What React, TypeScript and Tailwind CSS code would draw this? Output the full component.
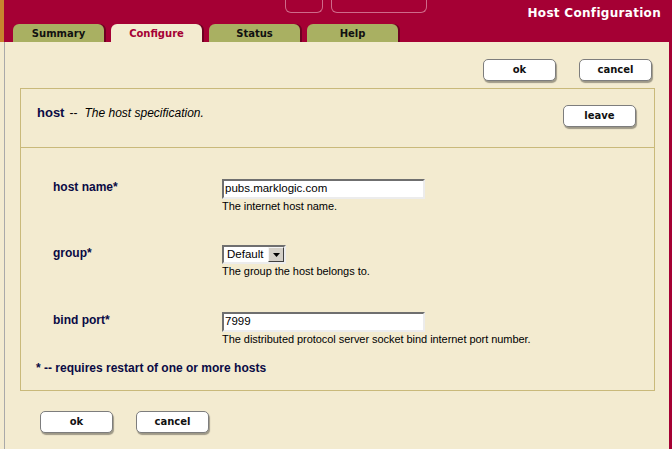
import React from "react";

const V = { fontFamily: '"DejaVu Sans", Verdana, sans-serif' };
const A = { fontFamily: '"Liberation Sans", Arial, sans-serif' };

function Btn({ label }: { label: string }) {
  return (
    <div
      style={V}
      className="w-[73px] h-[22px] flex items-center justify-center bg-white border border-[#7d7d7d] rounded-[5px] shadow-[1px_2px_1px_rgba(0,0,0,0.35)] text-[10px] font-bold text-[#111] leading-none"
    >
      {label}
    </div>
  );
}

function Tab({ label, active }: { label: string; active?: boolean }) {
  return (
    <div
      style={V}
      className={
        "w-[91px] h-[18px] rounded-t-[6px] flex items-center justify-center text-[10px] font-bold leading-none shadow-[2px_0_0_#6e0022] " +
        (active ? "bg-[#f3ebd0] text-[#a50034]" : "bg-[#a9b062] text-[#111]")
      }
    >
      <span className="mt-[1px]">{label}</span>
    </div>
  );
}

function TextInput({ value }: { value: string }) {
  return (
    <div
      style={A}
      className="w-[203px] h-[20px] bg-white border-2 border-t-[#6f6f6f] border-l-[#6f6f6f] border-b-[#ececec] border-r-[#ececec] flex items-center pl-[1px] text-[11.5px] text-black leading-none"
    >
      {value}
    </div>
  );
}

function Row({
  label,
  control,
  help,
  h,
}: {
  label: string;
  control: React.ReactNode;
  help: string;
  h?: string;
}) {
  return (
    <div className={"flex items-start " + (h ?? "")}>
      <div
        style={A}
        className="w-[169px] pt-[1px] text-[12px] leading-[14px] font-bold text-[#0a0a44]"
      >
        {label}
      </div>
      <div className="flex flex-col">
        {control}
        <div style={A} className="mt-[1px] text-[11px] leading-[13px] text-black tracking-[-0.05px]">
          {help}
        </div>
      </div>
    </div>
  );
}

export default function App() {
  return (
    <div className="w-[672px] h-[449px] overflow-hidden flex flex-col bg-[#a50034]">
      {/* header */}
      <div className="flex h-[42px] shrink-0">
        <div className="w-[4px] bg-[#c8842e]" />
        <div className="flex-1 flex flex-col">
          <div className="h-[24px] flex">
            <div className="ml-[281px] flex items-start gap-[8px]">
              <div className="w-[38px] h-[13px] border border-t-0 border-[#cf6a8a] rounded-b-[6px]" />
              <div className="w-[96px] h-[13px] border border-t-0 border-[#cf6a8a] rounded-b-[6px]" />
            </div>
            <div
              style={V}
              className="ml-auto self-center pr-[11px] mt-[1px] text-white font-bold text-[12px] tracking-[0.3px] leading-none"
            >
              Host Configuration
            </div>
          </div>
          <div className="h-[18px] flex pl-[9px] gap-[7px]">
            <Tab label="Summary" />
            <Tab label="Configure" active />
            <Tab label="Status" />
            <Tab label="Help" />
          </div>
        </div>
      </div>

      {/* body */}
      <div className="flex flex-1 min-h-0">
        <div className="flex-1 bg-[#f3ebd0] pl-[4px]">
          <div className="h-full border-l border-[#a9a9a9] flex flex-col">
            <div className="mt-[17px] flex justify-end gap-[23px] pr-[17px]">
              <Btn label="ok" />
              <Btn label="cancel" />
            </div>

            <div className="mt-[7px] ml-[15px] w-[635px] border border-[#c9b97a] flex flex-col">
              <div className="h-[59px] border-b border-[#c9b97a] flex items-start justify-between pl-[16px] pr-[18px] pt-[16px]">
                <div style={A} className="flex items-baseline text-[#0a0a44] leading-[16px]">
                  <span className="text-[13px] font-bold">host</span>
                  <span className="ml-[5px] text-[12px] text-black">--</span>
                  <span className="ml-[7px] text-[12px] italic text-black">
                    The host specification.
                  </span>
                </div>
                <Btn label="leave" />
              </div>

              <div className="pt-[31px] pb-[15px] flex flex-col">
                <div className="pl-[32px] flex flex-col">
                  <Row
                    h="h-[66px]"
                    label="host name*"
                    control={<TextInput value="pubs.marklogic.com" />}
                    help="The internet host name."
                  />
                  <Row
                    h="h-[67px]"
                    label="group*"
                    control={
                      <div
                        style={A}
                        className="w-[64px] h-[19px] bg-white border-2 border-t-[#6f6f6f] border-l-[#6f6f6f] border-b-[#ececec] border-r-[#ececec] flex items-center justify-between text-[11.5px] leading-none text-black"
                      >
                        <span className="pl-[3px]">Default</span>
                        <div className="w-[16px] h-[15px] bg-[#d4d0c8] border border-t-[#f4f4f4] border-l-[#f4f4f4] border-b-[#404040] border-r-[#404040] flex items-center justify-center">
                          <svg width="7" height="4" viewBox="0 0 7 4">
                            <path d="M0 0h7L3.5 4z" fill="#000" />
                          </svg>
                        </div>
                      </div>
                    }
                    help="The group the host belongs to."
                  />
                  <Row
                    label="bind port*"
                    control={<TextInput value="7999" />}
                    help="The distributed protocol server socket bind internet port number."
                  />
                </div>
                <div
                  style={A}
                  className="mt-[15px] pl-[15px] text-[12px] leading-[14px] font-bold text-[#0a0a44]"
                >
                  * -- requires restart of one or more hosts
                </div>
              </div>
            </div>

            <div className="mt-[20px] ml-[35px] flex gap-[23px]">
              <Btn label="ok" />
              <Btn label="cancel" />
            </div>
          </div>
        </div>
        <div className="w-[3px]" />
      </div>
    </div>
  );
}
